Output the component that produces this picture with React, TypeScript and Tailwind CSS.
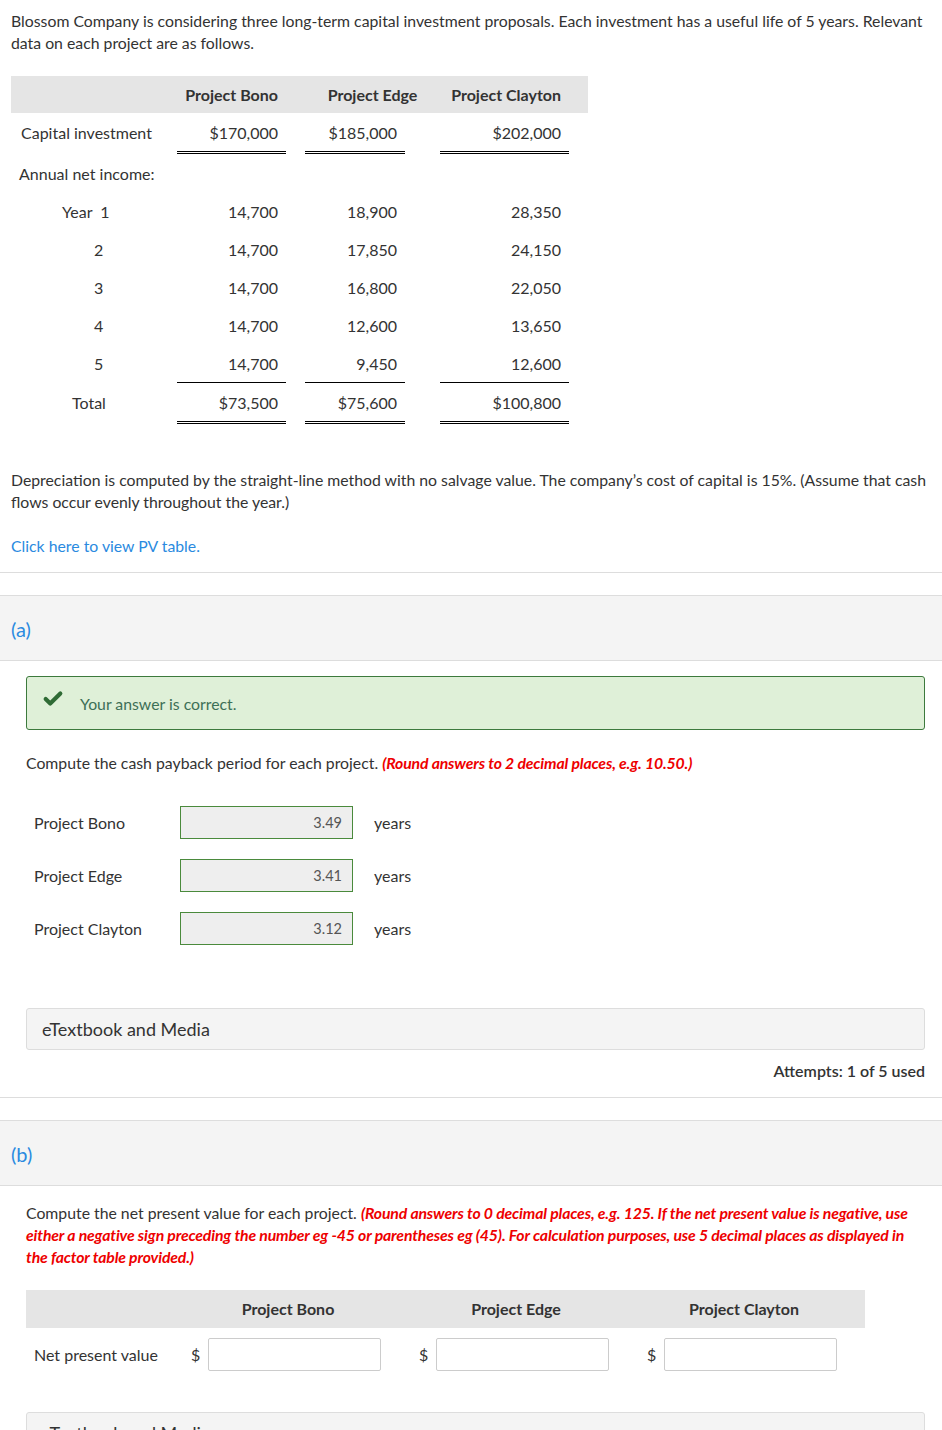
import { Check } from "lucide-react"

const years = [
  { label: "Year  1", bono: "14,700", edge: "18,900", clayton: "28,350" },
  { label: "2", bono: "14,700", edge: "17,850", clayton: "24,150" },
  { label: "3", bono: "14,700", edge: "16,800", clayton: "22,050" },
  { label: "4", bono: "14,700", edge: "12,600", clayton: "13,650" },
  { label: "5", bono: "14,700", edge: "9,450", clayton: "12,600" },
]

const payback = [
  { name: "Project Bono", value: "3.49" },
  { name: "Project Edge", value: "3.41" },
  { name: "Project Clayton", value: "3.12" },
]

function Band({ label }: { label: string }) {
  return (
    <div className="h-[66px] border-y border-[#dddddd] bg-[#f4f4f4] flex items-center px-[11px]">
      <span className="text-[20px] text-[#2a8ae0] mt-[2px]">{label}</span>
    </div>
  )
}

function Media() {
  return (
    <div className="ml-[26px] mr-[17px] h-[42px] flex items-center px-[15px] bg-[#f4f4f4] border border-[#dddddd] rounded-[3px] text-[18px] text-[#333]">
      eTextbook and Media
    </div>
  )
}

export default function App() {
  return (
    <div className="w-[942px] font-['Lato','Liberation_Sans',sans-serif] text-[15.8px] leading-[22px] text-[#333] bg-white pb-10">
      <p className="pl-[11px] pt-[10px] pr-[8px]">
        Blossom Company is considering three long-term capital investment proposals. Each investment has a useful life of 5 years. Relevant data on each project are as follows.
      </p>

      {/* data table */}
      <div className="mt-[22px] ml-[11px] w-[577px] text-[16px]">
        <div className="grid grid-cols-[166px_128px_135px_148px] h-[37px] items-center bg-[#e5e5e5] font-bold">
          <div />
          <div className="text-right pr-[27px]">Project Bono</div>
          <div className="text-center">Project Edge</div>
          <div className="text-right pr-[27px]">Project Clayton</div>
        </div>

        <div className="grid grid-cols-[166px_128px_135px_148px]">
          <div className="pt-[9px] pl-[10px]">Capital investment</div>
          <div className="w-[109px] text-right pr-2 pt-[9px] pb-[7px] border-b-[3px] border-double border-black">$170,000</div>
          <div className="w-[100px] text-right pr-2 pt-[9px] pb-[7px] border-b-[3px] border-double border-black">$185,000</div>
          <div className="w-[129px] text-right pr-2 pt-[9px] pb-[7px] border-b-[3px] border-double border-black">$202,000</div>
        </div>

        <div className="h-[39px] flex items-center pl-2">Annual net income:</div>

        {years.map((y, i) => {
          const last = i === years.length - 1
          const line = last ? "border-b border-black" : ""
          return (
            <div key={y.label} className="grid grid-cols-[166px_128px_135px_148px] h-[38px]">
              <div className={`flex items-center whitespace-pre ${i === 0 ? "pl-[51px]" : "pl-[83px]"}`}>{y.label}</div>
              <div className={`w-[109px] flex items-center justify-end pr-2 ${line}`}>{y.bono}</div>
              <div className={`w-[100px] flex items-center justify-end pr-2 ${line}`}>{y.edge}</div>
              <div className={`w-[129px] flex items-center justify-end pr-2 ${line}`}>{y.clayton}</div>
            </div>
          )
        })}

        <div className="grid grid-cols-[166px_128px_135px_148px]">
          <div className="pt-[9px] pl-[61px]">Total</div>
          <div className="w-[109px] text-right pr-2 pt-[9px] pb-[7px] border-b-[3px] border-double border-black">$73,500</div>
          <div className="w-[100px] text-right pr-2 pt-[9px] pb-[7px] border-b-[3px] border-double border-black">$75,600</div>
          <div className="w-[129px] text-right pr-2 pt-[9px] pb-[7px] border-b-[3px] border-double border-black">$100,800</div>
        </div>
      </div>

      <p className="mt-[45px] pl-[11px] pr-[8px]">
        Depreciation is computed by the straight-line method with no salvage value. The company’s cost of capital is 15%. (Assume that cash flows occur evenly throughout the year.)
      </p>
      <p className="mt-[22px] px-[11px] text-[#2a8ae0]">Click here to view PV table.</p>

      <div className="mt-[15px] border-t border-[#dddddd]" />
      <div className="mt-[22px]">
        <Band label="(a)" />
      </div>

      {/* part a */}
      <div className="mt-[15px] ml-[26px] mr-[17px] h-[54px] flex items-center bg-[#dff0d8] border border-[#3d7a3d] rounded-[3px] pl-[15px]">
        <Check className="w-[22px] h-[22px] text-[#2f6b35] -mt-2" strokeWidth={4.5} />
        <span className="ml-[16px] text-[#3d6f56] mt-[2px]">Your answer is correct.</span>
      </div>

      <p className="mt-[22px] px-[26px]">
        Compute the cash payback period for each project.{" "}
        <span className="text-[#ee0000] font-bold italic tracking-[-0.15px]">(Round answers to 2 decimal places, e.g. 10.50.)</span>
      </p>

      <div className="mt-[32px] pl-[34px] flex flex-col gap-[20px] text-[16px]">
        {payback.map((p) => (
          <div key={p.name} className="flex items-center">
            <span className="w-[146px]">{p.name}</span>
            <div className="w-[173px] h-[33px] bg-[#eeeeee] border border-[#4a8a3c] flex items-center justify-end pr-[10px] text-[14.5px] text-[#555]">
              {p.value}
            </div>
            <span className="ml-[21px]">years</span>
          </div>
        ))}
      </div>

      <div className="mt-[63px]">
        <Media />
      </div>
      <p className="mt-[10px] pr-[17px] text-right font-semibold text-[16px]">Attempts: 1 of 5 used</p>

      <div className="mt-[15px] border-t border-[#dddddd]" />
      <div className="mt-[22px]">
        <Band label="(b)" />
      </div>

      {/* part b */}
      <p className="mt-[16px] pl-[26px] pr-[30px]">
        Compute the net present value for each project.{" "}
        <span className="text-[#ee0000] font-bold italic tracking-[-0.15px]">
          (Round answers to 0 decimal places, e.g. 125. If the net present value is negative, use either a negative sign preceding the number eg -45 or parentheses eg (45). For calculation purposes, use 5 decimal places as displayed in the factor table provided.)
        </span>
      </p>

      <div className="mt-[22px] ml-[26px] w-[839px] text-[16px]">
        <div className="grid grid-cols-[148px_228px_228px_228px] h-[38px] items-center bg-[#e5e5e5] font-bold">
          <div />
          <div className="text-center">Project Bono</div>
          <div className="text-center">Project Edge</div>
          <div className="text-center">Project Clayton</div>
        </div>
        <div className="grid grid-cols-[148px_228px_228px_228px] mt-[10px] items-center">
          <div className="pl-2">Net present value</div>
          {[0, 1, 2].map((k) => (
            <div key={k} className="flex items-center pl-[17px]">
              <span className="w-[17px]">$</span>
              <div className="w-[173px] h-[33px] border border-[#cccccc] rounded-[2px] bg-white" />
            </div>
          ))}
        </div>
      </div>

      <div className="mt-[41px]">
        <Media />
      </div>
    </div>
  )
}
